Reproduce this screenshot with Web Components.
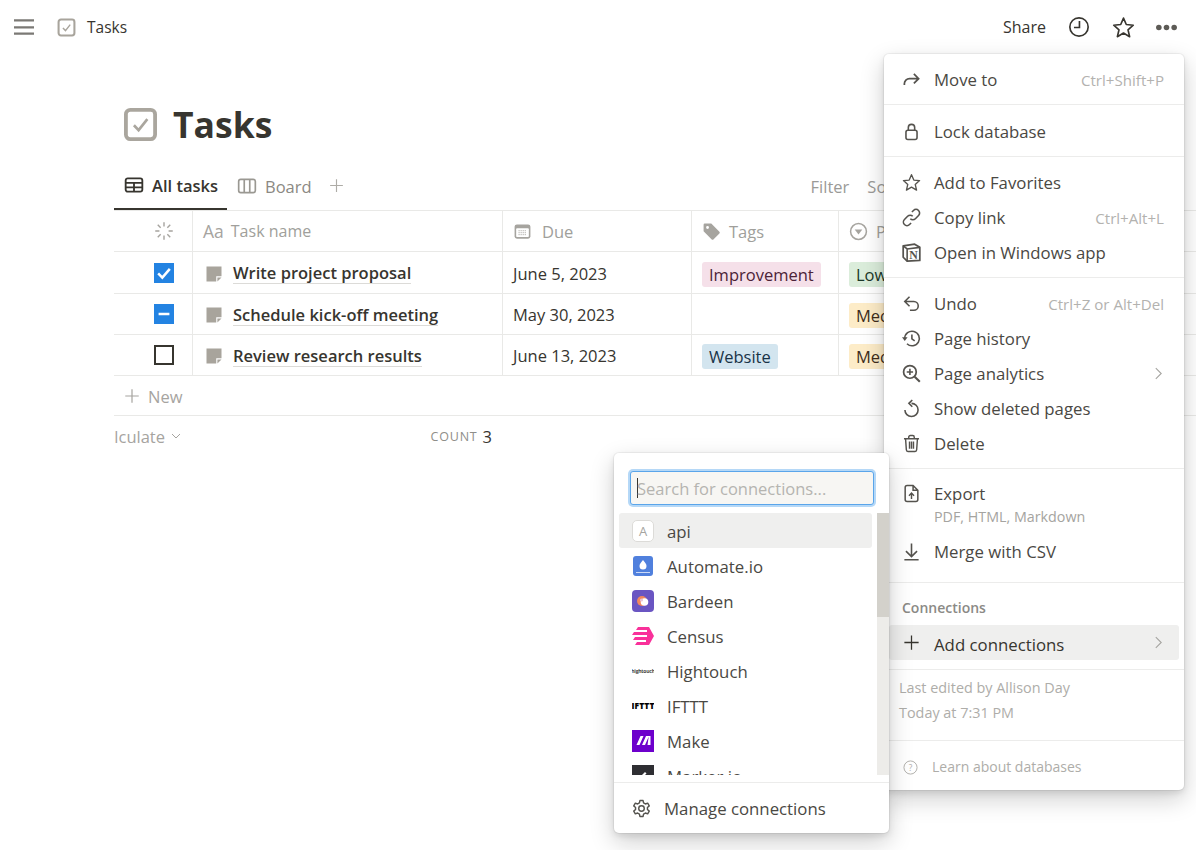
<!DOCTYPE html>
<html lang="en">
<head>
<meta charset="utf-8">
<title>Tasks</title>
<style>
  html, body { margin: 0; height: 100%; background: #fff; }
  body {
    position: relative;
    height: 850px;
    overflow: hidden;
    font-family: "Open Sans", "Liberation Sans", sans-serif;
    color: #37352f;
  }
</style>
</head>
<body>
  <tasks-page>
    <top-bar></top-bar>
    <page-title></page-title>
    <view-tabs></view-tabs>
    <task-table>
      <task-row tall state="checked" name="Write project proposal" due="June 5, 2023">
        <tag-pill slot="tags" color="pink">Improvement</tag-pill>
        <tag-pill slot="priority" color="green">Low</tag-pill>
      </task-row>
      <task-row state="mixed" name="Schedule kick-off meeting" due="May 30, 2023">
        <tag-pill slot="priority" color="orange">Medium</tag-pill>
      </task-row>
      <task-row state="empty" name="Review research results" due="June 13, 2023">
        <tag-pill slot="tags" color="blue">Website</tag-pill>
        <tag-pill slot="priority" color="orange">Medium</tag-pill>
      </task-row>
    </task-table>
  </tasks-page>

  <actions-menu></actions-menu>
  <connections-menu></connections-menu>

<script>
// all icons in one place, viewBox is 24x24
const ICONS = {
  menu: '<path d="M0 4h24M0 12.5h24M0 20h24" fill="none" stroke="currentColor" stroke-width="2.8"/>',
  checkbox: '<rect x="2" y="2" width="20" height="20" rx="3" fill="none" stroke="currentColor" stroke-width="2.6"/><path d="M7.5 12.5l3.2 3.4 6-7.6" fill="none" stroke="currentColor" stroke-width="1.8"/>',
  clock: '<circle cx="12" cy="12" r="10" fill="none" stroke="currentColor" stroke-width="1.8"/><path d="M12.5 5.5v7h-6" fill="none" stroke="currentColor" stroke-width="1.8"/>',
  star: '<path d="M12 2.2l2.9 6.7 7.3.7-5.5 4.8 1.7 7.2-6.4-3.8-6.4 3.8 1.7-7.2L1.8 9.6l7.3-.7z" fill="none" stroke="currentColor" stroke-width="1.7" stroke-linejoin="round"/>',
  dots: '<circle cx="4" cy="12" r="2.9" fill="currentColor"/><circle cx="12" cy="12" r="2.9" fill="currentColor"/><circle cx="20" cy="12" r="2.9" fill="currentColor"/>',
  table: '<rect x="2" y="4" width="20" height="16" rx="2.5" fill="none" stroke="currentColor" stroke-width="2.2"/><path d="M2 9.5h20M2 14.8h20M12 9.5V20" fill="none" stroke="currentColor" stroke-width="2.2"/>',
  board: '<rect x="2" y="4" width="20" height="16" rx="2.5" fill="none" stroke="currentColor" stroke-width="2"/><path d="M8.7 4v16M15.3 4v16" fill="none" stroke="currentColor" stroke-width="2"/>',
  plus: '<path d="M12 3v18M3 12h18" fill="none" stroke="currentColor" stroke-width="1.6"/>',
  spinner: '<path d="M12 1.500v5M12 17.500v5M1.500 12h5M17.500 12h5M4.500 4.500l3.500 3.500M16 16l3.500 3.500M4.500 19.500L8 16M16 8l3.500-3.500" fill="none" stroke="currentColor" stroke-width="1.700"/>',
  calendar: '<rect x="2" y="3" width="20" height="18" rx="3" fill="currentColor"/><rect x="4" y="8" width="16" height="11" rx="1" fill="#fff"/><path d="M7 11h10M7 13.5h10M7 16h10" stroke="currentColor" stroke-width="1.2" stroke-dasharray="1.4 1.2"/>',
  tag: '<path d="M2 3.5A1.5 1.5 0 0 1 3.5 2h8.2L22 12.3a1.5 1.5 0 0 1 0 2.1L14.4 22a1.5 1.5 0 0 1-2.1 0L2 11.7zM7 5.2a1.8 1.8 0 1 0 0 3.6 1.8 1.8 0 0 0 0-3.6z" fill="currentColor" fill-rule="evenodd"/>',
  select: '<circle cx="12" cy="12" r="10" fill="none" stroke="currentColor" stroke-width="1.9"/><path d="M7.2 9.5h9.6L12 15.8z" fill="currentColor"/>',
  note: '<path d="M2 2h20v13h-7v7H2z" fill="currentColor"/><path d="M16.5 16.5H22L16.5 22z" fill="currentColor"/>',
  check: '<path d="M5 12.5l5 5 9-10.5" fill="none" stroke="currentColor" stroke-width="3"/>',
  dash: '<path d="M5.5 12h13" fill="none" stroke="currentColor" stroke-width="3"/>',
  chevronDown: '<path d="M4 8l8 8 8-8" fill="none" stroke="currentColor" stroke-width="2"/>',
  chevronRight: '<path d="M7 2l10 10-10 10" fill="none" stroke="currentColor" stroke-width="2"/>',
  moveTo: '<path d="M3 19v-1.500a6.500 6.500 0 0 1 6.500-6.500H21M15 5l6 6-6 6" fill="none" stroke="currentColor" stroke-width="2.200"/>',
  lock: '<rect x="5" y="10.500" width="14" height="11.500" rx="2.500" fill="none" stroke="currentColor" stroke-width="2"/><path d="M8 10.500V7a4 4 0 0 1 8 0v3.500" fill="none" stroke="currentColor" stroke-width="2"/>',
  link: '<path d="M10.500 13.500a4.500 4.500 0 0 0 6.400 0l4-4a4.500 4.500 0 0 0-6.400-6.400l-2 2M13.500 10.500a4.500 4.500 0 0 0-6.400 0l-4 4a4.500 4.500 0 0 0 6.400 6.400l2-2" fill="none" stroke="currentColor" stroke-width="2"/>',
  notion: '<path d="M1.500 3.500L16 1.500l6.500 4v16.500l-16 1-5-5z" fill="none" stroke="currentColor" stroke-width="2.200" stroke-linejoin="round"/><path d="M1.500 3.500L6.500 7.500l16-2M6.500 7.500V23" fill="none" stroke="currentColor" stroke-width="2"/><text x="14.500" y="20" font-family="Liberation Serif, serif" font-weight="700" font-size="15" text-anchor="middle" fill="currentColor">N</text>',
  undo: '<path d="M9.500 3.500L3.500 9.500l6 6M3.500 9.500H15a5.500 5.500 0 0 1 0 11h-5" fill="none" stroke="currentColor" stroke-width="2"/>',
  history: '<path d="M3.500 12a9.200 9.200 0 1 1 2.800 6.600" fill="none" stroke="currentColor" stroke-width="2"/><path d="M0 10.500h7L3.500 15z" fill="currentColor"/><path d="M12.500 7v5.500l3.500 2.500" fill="none" stroke="currentColor" stroke-width="2"/>',
  analytics: '<circle cx="10" cy="10" r="8" fill="none" stroke="currentColor" stroke-width="2.200"/><path d="M16 16l6.500 6.500" fill="none" stroke="currentColor" stroke-width="2.600"/><path d="M10 6v8M6 10h8" fill="none" stroke="currentColor" stroke-width="2"/>',
  restore: '<path d="M12 5.500a8.300 8.300 0 1 1-8.300 8.300" fill="none" stroke="currentColor" stroke-width="2"/><path d="M13 1.200L8.700 5.500l4.300 4.300" fill="none" stroke="currentColor" stroke-width="2"/>',
  trash: '<path d="M2.500 6h19M8.500 6V4a2 2 0 0 1 2-2h3a2 2 0 0 1 2 2v2M4.500 6l1 14a2 2 0 0 0 2 2h9a2 2 0 0 0 2-2l1-14M9.500 9.500v9M12 9.500v9M14.500 9.500v9" fill="none" stroke="currentColor" stroke-width="1.800"/>',
  export: '<path d="M4 4.500A2.500 2.500 0 0 1 6.500 2H14l6 6v11.500a2.500 2.500 0 0 1-2.500 2.500h-11A2.500 2.500 0 0 1 4 19.500zM14 2v6h6" fill="none" stroke="currentColor" stroke-width="1.900"/><path d="M12 19v-7M8.800 14.800L12 11.500l3.200 3.300" fill="none" stroke="currentColor" stroke-width="1.800"/>',
  merge: '<path d="M12 2v16M5 11.500l7 7 7-7M3 22.500h18" fill="none" stroke="currentColor" stroke-width="2"/>',
  help: '<circle cx="12" cy="12" r="10.500" fill="none" stroke="currentColor" stroke-width="1.500"/><text x="12" y="17" font-family="Open Sans, sans-serif" font-size="13" text-anchor="middle" fill="currentColor">?</text>',
  gear: '<circle cx="12" cy="12" r="3.500" fill="none" stroke="currentColor" stroke-width="1.800"/><path d="M10 2h4l.6 3 2.300 1.300 2.900-1 2 3.400-2.300 2 0 2.600 2.300 2-2 3.400-2.900-1-2.300 1.300-.6 3h-4l-.6-3-2.300-1.300-2.900 1-2-3.400 2.300-2 0-2.600-2.300-2 2-3.400 2.900 1L9.400 5z" fill="none" stroke="currentColor" stroke-width="1.800" stroke-linejoin="round"/>'
};

class IconGlyph extends HTMLElement {
  connectedCallback() {
    const size = this.getAttribute('size') || 20;
    const name = this.getAttribute('name');
    this.attachShadow({ mode: 'open' }).innerHTML = `
      <style>
        :host { display: inline-flex; flex: none; width: ${size}px; height: ${size}px; }
        svg { width: 100%; height: 100%; display: block; overflow: visible; }
      </style>
      <svg viewBox="0 0 24 24" aria-hidden="true">${ICONS[name] || ''}</svg>`;
  }
}
customElements.define('icon-glyph', IconGlyph);

class TasksPage extends HTMLElement {
  constructor() {
    super();
    this.attachShadow({ mode: 'open' }).innerHTML = `
      <style>
        :host { display: flex; flex-direction: column; width: 1196px; height: 850px; overflow: hidden; }
      </style>
      <slot></slot>`;
  }
}
customElements.define('tasks-page', TasksPage);

class TopBar extends HTMLElement {
  constructor() {
    super();
    this.attachShadow({ mode: 'open' }).innerHTML = `
      <style>
        :host { display: flex; align-items: center; height: 54px; padding: 0 18px 0 14px; font-size: 16px; flex: none; }
        .menu { color: #7b7975; }
        .crumb { color: #a8a49c; margin-left: 23px; }
        .title { margin-left: 11px; color: #37352f; font-size: 15.500px; }
        .right { margin-left: auto; display: flex; align-items: center; }
        .share { margin-right: 22px; }
        .star { margin-left: 22px; }
        .dots { margin-left: 20px; color: #5d5b56; }
      </style>
      <icon-glyph class="menu" name="menu" size="20"></icon-glyph>
      <icon-glyph class="crumb" name="checkbox" size="19"></icon-glyph>
      <span class="title">Tasks</span>
      <div class="right">
        <span class="share">Share</span>
        <icon-glyph name="clock" size="22"></icon-glyph>
        <icon-glyph class="star" name="star" size="23"></icon-glyph>
        <icon-glyph class="dots" name="dots" size="23"></icon-glyph>
      </div>`;
  }
}
customElements.define('top-bar', TopBar);

class PageTitle extends HTMLElement {
  constructor() {
    super();
    this.attachShadow({ mode: 'open' }).innerHTML = `
      <style>
        :host { display: flex; align-items: center; gap: 15px; height: 56px; margin-top: 42px; padding-left: 123px; flex: none; }
        icon-glyph { color: #aaa69e; }
        h1 { margin: 0; font-size: 35.500px; line-height: 56px; font-weight: 700; color: #37352f; }
      </style>
      <icon-glyph name="checkbox" size="35"></icon-glyph>
      <h1>Tasks</h1>`;
  }
}
customElements.define('page-title', PageTitle);

class ViewTabs extends HTMLElement {
  constructor() {
    super();
    this.attachShadow({ mode: 'open' }).innerHTML = `
      <style>
        :host { display: flex; align-items: center; height: 58px; margin-left: 114px; font-size: 16.5px; flex: none; }
        .tab { display: flex; align-items: center; gap: 8px; height: 58px; padding-top: 10px; box-sizing: border-box; }
        .active { width: 113px; padding-left: 10px; font-weight: 600; border-bottom: 2px solid #37352f; }
        .board { margin-left: 10px; color: #8b8983; }
        .board icon-glyph { color: #9a9892; }
        .add { margin: 8px 0 0 16px; color: #aeaca7; }
        .tools { margin: 10px 0 0 466px; color: #9b9a97; display: flex; gap: 18px; white-space: nowrap; }
      </style>
      <div class="tab active"><icon-glyph name="table" size="20"></icon-glyph>All tasks</div>
      <div class="tab board"><icon-glyph name="board" size="20"></icon-glyph>Board</div>
      <icon-glyph class="add" name="plus" size="17"></icon-glyph>
      <div class="tools"><span>Filter</span><span>Sort</span></div>`;
  }
}
customElements.define('view-tabs', ViewTabs);

// the table grid is shared between header, rows and footer through a custom property
class TaskTable extends HTMLElement {
  constructor() {
    super();
    this.attachShadow({ mode: 'open' }).innerHTML = `
      <style>
        :host {
          display: block; margin-left: 114px; font-size: 16.5px; flex: none;
          --cols: 79px 310px 189px 147px 400px;
          --line: #e9e9e7;
        }
        .head { display: grid; grid-template-columns: var(--cols); height: 40px; border-top: 1px solid var(--line); border-bottom: 1px solid var(--line); color: #a09f9b; }
        .head > div { display: flex; align-items: center; border-right: 1px solid var(--line); padding-left: 10px; gap: 8px; box-sizing: border-box; }
        .head > div:first-child { justify-content: center; padding: 0 0 0 22px; }
        .head icon-glyph { color: #a6a49f; }
        .head .aa { color: #a6a49f; font-size: 17.500px; }
        .head .name { font-size: 16px; margin-left: -1px; }
        .new { display: flex; align-items: center; gap: 7px; padding: 1px 0 0 9px; box-sizing: border-box; color: #a6a49f; border-bottom: 1px solid var(--line); height: 40px; }
        .foot { display: grid; grid-template-columns: 293px 100px; height: 42px; align-items: center; }
        .calc { display: flex; justify-content: flex-end; align-items: center; gap: 5px; width: 68px; overflow: hidden; color: #a6a49f; white-space: nowrap; margin-top: -2px; }
        .calc span { flex: none; }
        .count { display: flex; align-items: center; justify-content: flex-end; gap: 5px; width: 85px; color: #37352f; white-space: nowrap; margin-top: -2px; }
        .count small { font-size: 12.500px; letter-spacing: .8px; color: #8f8e89; }
      </style>
      <div class="head">
        <div><icon-glyph name="spinner" size="20"></icon-glyph></div>
        <div><span class="aa">Aa</span><span class="name">Task name</span></div>
        <div><icon-glyph name="calendar" size="19"></icon-glyph><span style="margin-left:2px">Due</span></div>
        <div><icon-glyph name="tag" size="19"></icon-glyph>Tags</div>
        <div style="border:0"><icon-glyph name="select" size="19"></icon-glyph>Priority</div>
      </div>
      <slot></slot>
      <div class="new"><icon-glyph name="plus" size="18"></icon-glyph>New</div>
      <div class="foot">
        <div class="calc"><span>Calculate</span><icon-glyph name="chevronDown" size="12"></icon-glyph></div>
        <div class="count"><small>COUNT</small>3</div>
      </div>`;
  }
}
customElements.define('task-table', TaskTable);

class TaskRow extends HTMLElement {
  connectedCallback() {
    const state = this.getAttribute('state');
    const mark = state === 'checked' ? 'check' : state === 'mixed' ? 'dash' : '';
    this.attachShadow({ mode: 'open' }).innerHTML = `
      <style>
        :host { display: grid; grid-template-columns: var(--cols); height: 40px; border-bottom: 1px solid var(--line); }
        :host([tall]) { height: 41px; }
        .cell { display: flex; align-items: center; border-right: 1px solid var(--line); padding-left: 10px; box-sizing: border-box; overflow: hidden; white-space: nowrap; }
        .box { padding-left: 40px; }
        .tick { width: 20px; height: 20px; box-sizing: border-box; display: flex; background: #2383e2; color: #fff; }
        .tick.empty { background: #fff; border: 2px solid #37352f; }
        .note { color: #a8a49c; margin: 0 10px 0 2px; }
        .name { font-weight: 600; color: #37352f; border-bottom: 1px solid #dcdbd8; line-height: 20px; }
        .low { padding-top: 2px; }
        .date { padding-top: 1px; }
        .pad { padding-top: 3px; }
      </style>
      <div class="cell box"><div class="tick ${state}"><icon-glyph name="${mark}" size="20"></icon-glyph></div></div>
      <div class="cell low"><icon-glyph class="note" name="note" size="18"></icon-glyph><span class="name">${this.getAttribute('name')}</span></div>
      <div class="cell date">${this.getAttribute('due')}</div>
      <div class="cell pad"><slot name="tags"></slot></div>
      <div class="cell pad" style="border:0"><slot name="priority"></slot></div>`;
  }
}
customElements.define('task-row', TaskRow);

class TagPill extends HTMLElement {
  constructor() {
    super();
    this.attachShadow({ mode: 'open' }).innerHTML = `
      <style>
        :host { display: inline-block; height: 25px; line-height: 25px; padding: 0 7px; border-radius: 3px; font-size: 16.5px; white-space: nowrap; }
        :host([color="pink"]) { background: #f5e0e9; color: #4c2337; }
        :host([color="green"]) { background: #dbeddb; color: #1c3829; }
        :host([color="orange"]) { background: #fdecc8; color: #402c1b; }
        :host([color="blue"]) { background: #d3e5ef; color: #183347; }
      </style>
      <slot></slot>`;
  }
}
customElements.define('tag-pill', TagPill);

class MenuItem extends HTMLElement {
  connectedCallback() {
    const hint = this.getAttribute('hint');
    const sub = this.getAttribute('sub');
    const arrow = this.hasAttribute('arrow');
    this.attachShadow({ mode: 'open' }).innerHTML = `
      <style>
        :host { display: flex; align-items: center; min-height: 35px; margin: 0 5px; padding: 0 15px 0 13px; border-radius: 3px; font-size: 16.800px; color: #4a4843; white-space: nowrap; }
        :host([active]) { background: #efefee; color: #37352f; }
        :host([sub]) { align-items: flex-start; }
        icon-glyph { color: #55534e; margin-right: 13px; }
        :host([sub]) icon-glyph { margin-top: 7px; }
        :host([active]) icon-glyph { color: #37352f; }
        .text { flex: 1; }
        .sub { display: block; font-size: 14.300px; color: #a5a4a0; line-height: 20px; margin: 1px 0 7px; }
        .label { line-height: 35px; display: block; }
        :host([active]) .label { padding-top: 4px; line-height: 31px; }
        :host([sub]) .label { line-height: 24px; padding-top: 5px; }
        .hint { font-size: 15.100px; color: #b3b2af; }
        :host([active]) .arrow, .arrow { color: #a5a4a0; margin: 0 -1px 0 0; }
      </style>
      <icon-glyph name="${this.getAttribute('icon')}" size="19"></icon-glyph>
      <div class="text"><span class="label"><slot></slot></span>${sub ? `<span class="sub">${sub}</span>` : ''}</div>
      ${hint ? `<span class="hint">${hint}</span>` : ''}
      ${arrow ? '<icon-glyph class="arrow" name="chevronRight" size="13"></icon-glyph>' : ''}`;
  }
}
customElements.define('menu-item', MenuItem);

// the right hand "..." menu, it lies over the table
class ActionsMenu extends HTMLElement {
  constructor() {
    super();
    this.attachShadow({ mode: 'open' }).innerHTML = `
      <style>
        :host {
          display: block; position: absolute; left: 884px; top: 54px; width: 300px; height: 736px;
          background: #fff; border-radius: 5px; box-sizing: border-box;
          box-shadow: rgba(15,15,15,.05) 0 0 0 1px, rgba(15,15,15,.1) 0 3px 6px, rgba(15,15,15,.2) 0 9px 24px;
        }
        section { padding: 8px 0 7px; border-bottom: 1px solid #ececeb; }
        section:first-child { padding: 10px 0 5px; }
        section:last-child { border: 0; }
        .lock { padding: 9px 0 7px; }
        .export { padding: 8px 0 13px; }
        .conn { padding: 13px 0 9px; }
        .conn h3 { margin: 0 0 5px 18px; font-size: 14px; line-height: 24px; font-weight: 600; color: #8b8a86; }
        .edited { padding: 5px 15px 15px; font-size: 14.400px; line-height: 25px; color: #aeada9; }
        .learn { display: flex; align-items: center; gap: 14px; padding: 14px 19px; font-size: 14px; line-height: 24px; color: #aeada9; }
      </style>
      <section>
        <menu-item icon="moveTo" hint="Ctrl+Shift+P">Move to</menu-item>
      </section>
      <section class="lock">
        <menu-item icon="lock">Lock database</menu-item>
      </section>
      <section>
        <menu-item icon="star">Add to Favorites</menu-item>
        <menu-item icon="link" hint="Ctrl+Alt+L">Copy link</menu-item>
        <menu-item icon="notion">Open in Windows app</menu-item>
      </section>
      <section>
        <menu-item icon="undo" hint="Ctrl+Z or Alt+Del">Undo</menu-item>
        <menu-item icon="history">Page history</menu-item>
        <menu-item icon="analytics" arrow>Page analytics</menu-item>
        <menu-item icon="restore">Show deleted pages</menu-item>
        <menu-item icon="trash">Delete</menu-item>
      </section>
      <section class="export">
        <menu-item icon="export" sub="PDF, HTML, Markdown">Export</menu-item>
        <menu-item icon="merge">Merge with CSV</menu-item>
      </section>
      <section class="conn">
        <h3>Connections</h3>
        <menu-item icon="plus" arrow active>Add connections</menu-item>
      </section>
      <section class="edited">
        <div>Last edited by Allison Day</div>
        <div>Today at 7:31 PM</div>
      </section>
      <section class="learn">
        <icon-glyph name="help" size="15"></icon-glyph><span>Learn about databases</span>
      </section>`;
  }
}
customElements.define('actions-menu', ActionsMenu);

class ConnectionItem extends HTMLElement {
  constructor() {
    super();
    this.attachShadow({ mode: 'open' }).innerHTML = `
      <style>
        :host { display: flex; align-items: center; gap: 13px; height: 35px; padding-left: 13px; border-radius: 3px; font-size: 16.800px; color: #4a4843; white-space: nowrap; flex: none; }
        :host([active]) { background: #efefee; }
        .logo { display: flex; width: 22px; height: 22px; flex: none; align-items: center; justify-content: center; overflow: hidden; }
        .text { padding-top: 2px; }
      </style>
      <div class="logo"><slot name="logo"></slot></div>
      <span class="text"><slot></slot></span>`;
  }
}
customElements.define('connection-item', ConnectionItem);

// the popup that opens from "Add connections", sits over the first menu
class ConnectionsMenu extends HTMLElement {
  constructor() {
    super();
    this.attachShadow({ mode: 'open' }).innerHTML = `
      <style>
        :host {
          display: flex; flex-direction: column; position: absolute; left: 614px; top: 453px; width: 275px; height: 380px;
          background: #fff; border-radius: 5px; overflow: hidden; box-sizing: border-box;
          box-shadow: rgba(15,15,15,.05) 0 0 0 1px, rgba(15,15,15,.1) 0 3px 6px, rgba(15,15,15,.2) 0 9px 24px;
        }
        .search { margin: 18px 15px 8px 16px; height: 34px; box-sizing: border-box; background: #f7f6f3; border: 1px solid #5aa5ea; box-shadow: 0 0 0 2px #b5d8f7; border-radius: 3px; display: flex; align-items: center; padding-left: 6px; font-size: 16.500px; color: #b5b4b0; flex: none; white-space: nowrap; }
        .caret { width: 1px; height: 20px; background: #37352f; margin-right: -1px; }
        .body { display: flex; height: 262px; flex: none; }
        .list { width: 253px; margin-left: 5px; overflow: hidden; display: flex; flex-direction: column; }
        .track { width: 12px; margin-left: 5px; background: #edece9; flex: none; }
        .thumb { height: 104px; background: #d3d1cb; }
        .foot { margin-top: 7px; border-top: 1px solid #ececeb; height: 50px; display: flex; align-items: center; gap: 13px; padding-left: 18px; font-size: 16.800px; color: #4a4843; flex: none; }
        .foot icon-glyph { color: #55534e; }
        .a { width: 22px; height: 22px; box-sizing: border-box; border: 1px solid #dcdbd8; border-radius: 5px; font-size: 13px; line-height: 20px; text-align: center; color: #a5a4a0; background: #fff; }
        svg { display: block; }
        .tiny { font-size: 5px; color: #45433f; font-weight: 700; letter-spacing: -.2px; white-space: nowrap; }
        .ifttt { font-size: 8.500px; color: #000; font-weight: 800; letter-spacing: .1px; }
      </style>
      <div class="search"><span class="caret"></span>Search for connections...</div>
      <div class="body">
        <div class="list">
          <connection-item active><span class="a" slot="logo">A</span>api</connection-item>
          <connection-item>
            <svg slot="logo" width="20" height="20" viewBox="0 0 20 20"><rect width="20" height="20" rx="3" fill="#5080dd"/><path d="M10 4c2 2.500 3.500 4 3.500 6a3.500 3.500 0 0 1-7 0c0-2 1.500-3.500 3.500-6z" fill="#fff"/><path d="M3 16.500h14" stroke="#cbd9f6" stroke-width="1"/></svg>
            Automate.io
          </connection-item>
          <connection-item>
            <svg slot="logo" width="22" height="22" viewBox="0 0 22 22"><rect width="22" height="22" rx="4" fill="#6a55c2"/><circle cx="10" cy="11" r="5" fill="#f2875e"/><circle cx="12.500" cy="12" r="3.800" fill="#fff"/><circle cx="9.500" cy="10" r="1.600" fill="#e8c3d8"/></svg>
            Bardeen
          </connection-item>
          <connection-item>
            <svg slot="logo" width="22" height="20" viewBox="0 0 22 20"><path d="M6 1h11l5 9-5 9H3l2-3h9v-2H1l2-3h12V9H0l2-3h13V4H4z" fill="#f9319a"/></svg>
            Census
          </connection-item>
          <connection-item><span class="tiny" slot="logo">hightouch</span>Hightouch</connection-item>
          <connection-item><span class="ifttt" slot="logo">IFTTT</span>IFTTT</connection-item>
          <connection-item>
            <svg slot="logo" width="22" height="23" viewBox="0 0 22 23"><rect width="22" height="23" fill="#6d00cc"/><path d="M4.500 16l4-9h3l-4 9zM10 16l4-9h3l-4 9zM15.500 16l1.300-9h1.700v9z" fill="#fff"/></svg>
            Make
          </connection-item>
          <connection-item>
            <svg slot="logo" width="22" height="22" viewBox="0 0 22 22"><rect width="22" height="22" fill="#2e2e32"/><path d="M7 13l6-6 1.500 1.500-6 6z" fill="#fff"/></svg>
            Marker.io
          </connection-item>
        </div>
        <div class="track"><div class="thumb"></div></div>
      </div>
      <div class="foot"><icon-glyph name="gear" size="19"></icon-glyph>Manage connections</div>`;
  }
}
customElements.define('connections-menu', ConnectionsMenu);
</script>
</body>
</html>
